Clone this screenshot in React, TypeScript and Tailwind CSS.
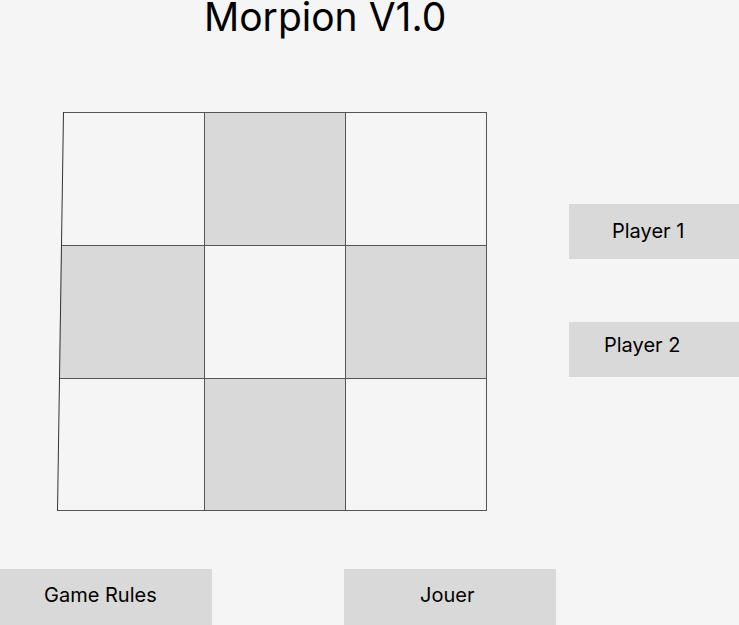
import React from "react";

const line = "border-[#555]";

export default function App() {
  return (
    <div
      className="w-[739px] h-[625px] bg-[#f5f5f5] overflow-hidden flex flex-col text-black"
      style={{ fontFamily: "Inter, 'Noto Sans', sans-serif" }}
    >
      <h1 className="text-[39px] leading-[40px] font-normal pl-[204px] -mt-[3px]">Morpion V1.0</h1>

      <div className="flex mt-[75px]">
        <div className="relative ml-[57px] w-[430px] h-[399px] grid grid-cols-[147px_141px_142px] grid-rows-[133px_133px_133px]">
          {/* row 1 */}
          <div
            className={`border-t ${line} bg-[#f5f5f5]`}
            style={{ clipPath: "polygon(6px 0, 100% 0, 100% 100%, 4px 100%)" }}
          />
          <div className={`border-t border-l ${line} bg-[#d9d9d9]`} />
          <div className={`border-t border-l border-r ${line} bg-[#f5f5f5]`} />
          {/* row 2 */}
          <div
            className={`border-t ${line} bg-[#d9d9d9]`}
            style={{ clipPath: "polygon(4px 0, 100% 0, 100% 100%, 2px 100%)" }}
          />
          <div className={`border-t border-l ${line} bg-[#f5f5f5]`} />
          <div className={`border-t border-l border-r ${line} bg-[#d9d9d9]`} />
          {/* row 3 */}
          <div
            className={`border-t border-b ${line} bg-[#f5f5f5]`}
            style={{ clipPath: "polygon(2px 0, 100% 0, 100% 100%, 0 100%)" }}
          />
          <div className={`border-t border-l border-b ${line} bg-[#d9d9d9]`} />
          <div className={`border-t border-l border-r border-b ${line} bg-[#f5f5f5]`} />
          {/* slanted left edge */}
          <div className="absolute left-[3px] top-0 w-px h-[399px] bg-[#333] rotate-[0.86deg]" />
        </div>

        <div className="ml-[82px] flex flex-col">
          <div className="mt-[92px] w-[170px] h-[55px] bg-[#d9d9d9] pl-[43px] pt-[15px] text-[20px] leading-[24px]">
            Player 1
          </div>
          <div className="mt-[63px] w-[170px] h-[55px] bg-[#d9d9d9] pl-[35px] pt-[11px] text-[20px] leading-[24px]">
            Player 2
          </div>
        </div>
      </div>

      <div className="flex mt-[58px]">
        <div className="w-[212px] h-[56px] bg-[#d9d9d9] pl-[44px] pt-[14px] text-[20px] leading-[24px]">
          Game Rules
        </div>
        <div className="ml-[132px] w-[212px] h-[56px] bg-[#d9d9d9] pl-[76px] pt-[14px] text-[20px] leading-[24px]">
          Jouer
        </div>
      </div>
    </div>
  );
}
